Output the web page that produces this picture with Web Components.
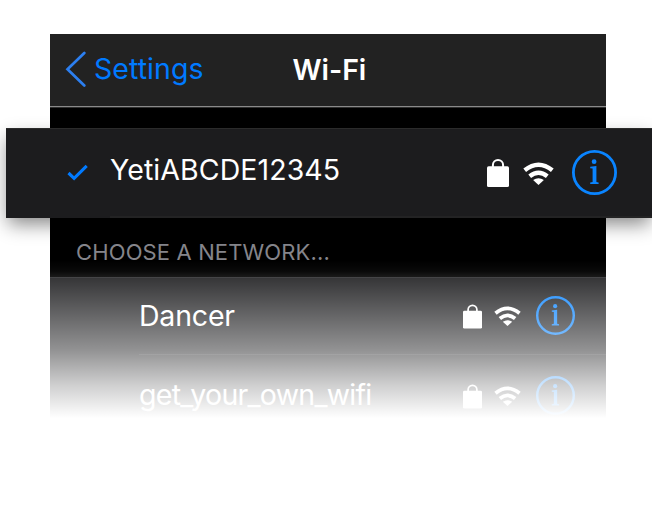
<!DOCTYPE html>
<html lang="en">
<head>
<meta charset="utf-8">
<title>Wi-Fi</title>
<style>
html,body{margin:0;background:#fff;height:508px;overflow:hidden}
body{font-family:Inter,"Liberation Sans",sans-serif;color:#fff}
</style>
</head>
<body>
<wifi-screen></wifi-screen>
<script>
const define=(name,html)=>customElements.define(name,class extends HTMLElement{
  constructor(){super();this.attachShadow({mode:'open'}).innerHTML=html;}
});

define('lock-icon',`<style>:host{display:block;width:22px;height:28px}svg{display:block;width:100%;height:100%}</style>
<svg viewBox="0 0 22 28"><rect x="0" y="7.2" width="22" height="20.8" rx="1.6" fill="#fff"/><path d="M5.9 8.5V6.1a5.1 5.1 0 0 1 10.2 0v2.4" fill="none" stroke="#fff" stroke-width="2"/></svg>`);

define('wifi-icon',`<style>:host{display:block;width:31px;height:23px}svg{display:block;width:100%;height:100%}</style>
<svg viewBox="0 0 31 23"><g fill="none" stroke="#fff" stroke-width="4.4"><path d="M1.7 8.2Q15.5-2.8 29.3 8.2"/><path d="M6.7 14.3Q15.5 7.3 24.3 14.3"/></g><path d="M10.1 18.1Q15.5 14.4 20.9 18.1L15.5 23Z" fill="#fff"/></svg>`);

define('info-icon',`<style>:host{display:block;width:45px;height:45px}svg{display:block;width:100%;height:100%}</style>
<svg viewBox="0 0 45 45"><circle cx="22.5" cy="22.5" r="21.1" fill="none" stroke="#0a84ff" stroke-width="2.8"/><circle cx="22.1" cy="11.7" r="2.4" fill="#0a84ff"/><path d="M18.2 16.8L24.4 15.9V32.1L26.6 32.5V34H18.2V32.5L20.6 32.1V18.5L18.2 18.2Z" fill="#0a84ff"/></svg>`);

define('nav-header',`<style>
:host{display:flex;align-items:center;height:72px;background:#222;border-bottom:1px solid #8a8a8a;box-shadow:0 1px #2f2f2f;padding-left:15px;box-sizing:content-box}
svg{width:21px;height:38px;margin:-2px 8px 0 0}
.back{font-size:28.5px;line-height:34px;color:#007aff;letter-spacing:.05px;width:198.5px;margin-top:-2px}
.title{font-size:28.5px;line-height:34px;font-weight:600;letter-spacing:-.05px;white-space:nowrap;margin-top:-1px}
</style><svg viewBox="0 0 21 38"><path d="M19.3 3L2.5 19.2L19.3 35.5" fill="none" stroke="#2c7ff0" stroke-width="2.7" stroke-linecap="round"/></svg><span class="back"><slot name="back"></slot></span><span class="title"><slot></slot></span>`);

define('selected-network',`<style>
:host{display:flex;align-items:center;position:relative;z-index:2;box-sizing:border-box;height:90px;margin:0 -46px 0 -44px;padding:0 35px 0 61px;background:#1c1c1e;border-top:1px solid #2b2b2b;box-shadow:0 8px 18px -2px rgba(0,0,0,.48)}
:host::after{content:"";position:absolute;left:104px;right:0;bottom:0;height:2px;background:#232324}
.check{width:21px;height:17px;margin:-2px 22px 0 0}
.name{flex:1;font-size:28.5px;line-height:34px;letter-spacing:.08px;white-space:nowrap;margin-top:-7px}
lock-icon{margin:-1px 14px 0 0}wifi-icon{margin:-1px 18px 0 0}info-icon{margin-top:-2px}
</style><svg class="check" viewBox="0 0 21 17"><path d="M1.5 9L7.1 14.3L19.7 1.9" fill="none" stroke="#007aff" stroke-width="3.1"/></svg><span class="name"><slot></slot></span><lock-icon></lock-icon><wifi-icon></wifi-icon><info-icon></info-icon>`);

define('section-label',`<style>:host{display:block;box-sizing:border-box;height:59px;padding:20px 0 0 26px;font-size:22px;line-height:28px;color:#85858b;letter-spacing:.13px;white-space:nowrap}</style><slot></slot>`);

define('network-row',`<style>
:host{display:flex;align-items:center;box-sizing:border-box;height:77px;padding:0 31px 0 89px;background:#1c1c1e;position:relative}
:host::before{content:"";position:absolute;top:0;right:0;left:var(--line,0);height:1px;background:#2f2f31}
.name{flex:1;font-size:28.5px;line-height:34px;letter-spacing:var(--tracking,-.2px);white-space:nowrap;margin-top:var(--lift,0)}
lock-icon{width:19px;height:25px;margin:1px 12.5px 0 0}wifi-icon{width:27px;height:20px;margin:1px 15px 0 0}info-icon{width:39px;height:39px;margin-top:-1px}
</style><span class="name"><slot></slot></span><lock-icon></lock-icon><wifi-icon></wifi-icon><info-icon></info-icon>`);

define('wifi-screen',`<style>
:host{display:block;padding:34px 46px 0 50px}
.phone{position:relative;background:#000}
.gap{height:21px}
.fade{position:absolute;z-index:1;inset:226px 0 -1px 0;background:linear-gradient(#fff0 0,rgba(255,255,255,.035) 11px,rgba(255,255,255,.115) 18px,rgba(255,255,255,.52) 90px,rgba(255,255,255,.79) 125px,#fff 158px)}
.second{--line:89px;--tracking:-.72px;--lift:-2px;height:83px}
</style><div class="phone"><nav-header><span slot="back">Settings</span>Wi-Fi</nav-header><div class="gap"></div><selected-network>YetiABCDE12345</selected-network><section-label>CHOOSE A NETWORK...</section-label><network-row>Dancer</network-row><network-row class="second">get_your_own_wifi</network-row><div class="fade"></div></div>`);
</script>
</body>
</html>
